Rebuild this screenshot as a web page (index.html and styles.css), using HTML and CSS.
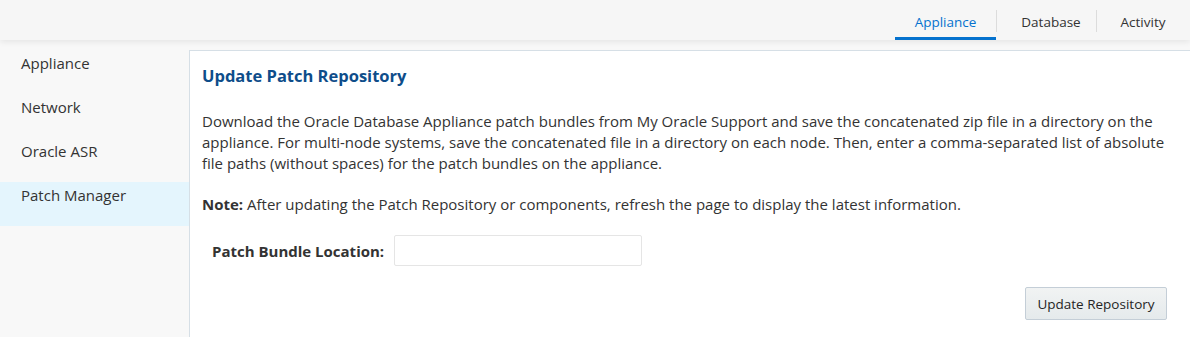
FILE: index.html
```html
<!DOCTYPE html>
<html lang="en">
<head>
<meta charset="utf-8">
<title>Patch Manager</title>
<link rel="stylesheet" href="styles.css">
</head>
<body>
<header class="topbar">
  <nav class="tabs">
    <a class="tab active">Appliance</a>
    <a class="tab">Database</a>
    <a class="tab">Activity</a>
  </nav>
</header>
<div class="body">
  <aside class="sidenav">
    <a class="navitem">Appliance</a>
    <a class="navitem">Network</a>
    <a class="navitem">Oracle ASR</a>
    <a class="navitem selected">Patch Manager</a>
  </aside>
  <main class="panel">
    <h1 class="title">Update Patch Repository</h1>
    <p class="desc">Download the Oracle Database Appliance patch bundles from My Oracle Support and save the concatenated zip file in a directory on the appliance. For multi-node systems, save the concatenated file in a directory on each node. Then, enter a comma-separated list of absolute file paths (without spaces) for the patch bundles on the appliance.</p>
    <p class="note"><b>Note:</b> After updating the Patch Repository or components, refresh the page to display the latest information.</p>
    <div class="field">
      <label class="label">Patch Bundle Location:</label>
      <input class="input" type="text">
    </div>
    <div class="actions">
      <button class="btn">Update Repository</button>
    </div>
  </main>
</div>
</body>
</html>
```

FILE: styles.css
```css
html, body {
  margin: 0;
  padding: 0;
}
body {
  width: 1190px;
  height: 337px;
  overflow: hidden;
  font-family: "Open Sans", "Noto Sans", sans-serif;
  color: #333;
  background: #f8f8f8;
}
.topbar {
  height: 40px;
  background: #f6f6f6;
  display: flex;
  justify-content: flex-end;
  position: relative;
  z-index: 1;
  box-shadow: 0 2px 6px rgba(0,0,0,0.08);
}
.tabs {
  display: flex;
  align-items: stretch;
}
.tab {
  display: flex;
  align-items: center;
  justify-content: center;
  font-size: 13.5px;
  color: #333;
  height: 40px;
  box-sizing: border-box;
  position: relative;
  padding-top: 4px;
}
.tab:nth-child(1) { width: 101px; }
.tab:nth-child(2) { width: 100px; padding-left: 10px; }
.tab:nth-child(3) { width: 94px; }
.tab + .tab::before {
  content: "";
  position: absolute;
  left: 0;
  top: 10px;
  height: 22px;
  width: 1px;
  background: #dcdcdc;
}
.tab.active {
  color: #0572ce;
  border-bottom: 3px solid #0572ce;
  padding-top: 7px;
}
.body {
  display: flex;
  padding-top: 10px;
  height: 287px;
}
.sidenav {
  width: 189px;
  flex: none;
  display: flex;
  flex-direction: column;
}
.navitem {
  height: 44px;
  box-sizing: border-box;
  padding: 3px 0 0 21px;
  font-size: 15px;
  line-height: 20px;
  color: #333;
}
.navitem.selected {
  background: #e4f5fd;
}
.panel {
  flex: 1;
  background: #fff;
  border-left: 1px solid #d6dfe6;
  border-top: 1px solid #d6dfe6;
  padding: 13px 12px 0 12px;
}
.title {
  margin: 0;
  font-size: 16.5px;
  font-weight: 700;
  color: #0e4d8a;
  line-height: 24px;
}
.desc {
  margin: 23px 0 0 0;
  font-size: 15px;
  line-height: 21px;
  color: #333;
}
.note {
  margin: 20px 0 0 0;
  font-size: 15px;
  line-height: 21px;
  color: #333;
}
.note b { font-weight: 700; }
.field {
  display: flex;
  align-items: center;
  margin-top: 20px;
  padding-left: 10px;
}
.label {
  font-size: 15px;
  font-weight: 700;
  color: #333;
  margin-right: 10px;
}
.input {
  width: 248px;
  height: 31px;
  box-sizing: border-box;
  border: 1px solid #e5e5e5;
  border-radius: 2px;
  background: #fff;
  padding: 0 6px;
  margin: 0;
}
.actions {
  display: flex;
  justify-content: flex-end;
  margin-top: 21px;
  padding-right: 11px;
}
.btn {
  font-family: inherit;
  font-size: 13.5px;
  color: #252525;
  width: 142px;
  height: 33px;
  border: 1px solid #c4ced7;
  border-radius: 2px;
  background: linear-gradient(#f1f3f3, #e5eaec);
  padding: 0;
}
```
